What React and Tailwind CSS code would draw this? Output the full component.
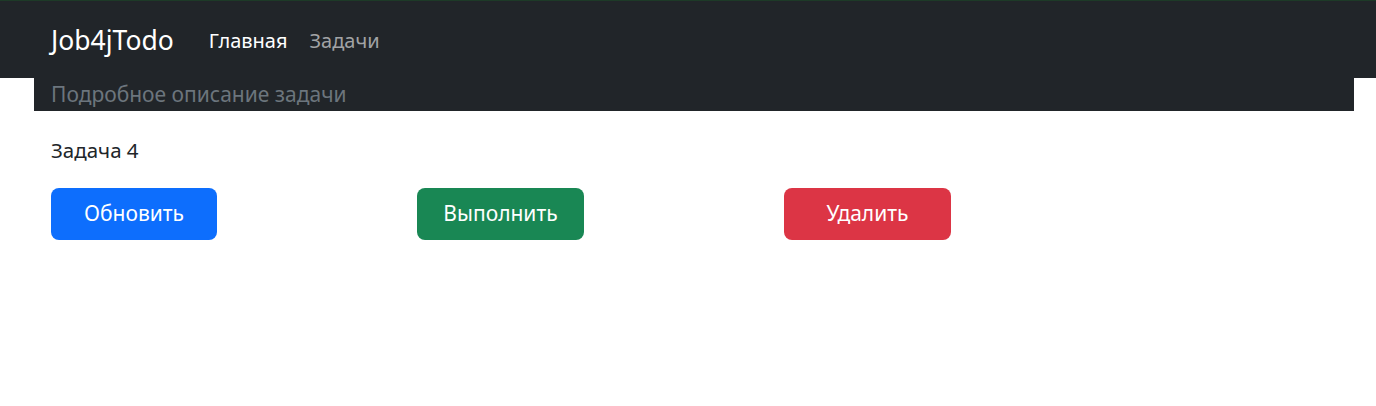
import React from "react";

export default function App() {
  return (
    <div className="min-h-[406px] bg-white" style={{ fontFamily: '"Noto Sans", "Open Sans", sans-serif' }}>
      <nav className="h-[78px] bg-[#212529] border-t border-[#1d3a27] flex items-center pl-[51px] pt-[2px]">
        <span className="text-white text-[26.5px] leading-none mr-[35px]">Job4jTodo</span>
        <a className="text-white text-[20px] mr-[22px]">Главная</a>
        <a className="text-[#a1a3a5] text-[20px]">Задачи</a>
      </nav>

      <div className="mx-[34px] w-[1320px]">
        <div className="h-[33px] bg-[#212529] px-[17px] flex items-center">
          <span className="text-[#6c757d] text-[21px] leading-none">Подробное описание задачи</span>
        </div>
        <div className="px-[17px] pt-[27px]">
          <p className="text-[#212529] text-[20.5px] leading-[24px]">Задача 4</p>
          <div className="flex mt-[26px]">
            <div className="w-[366px]">
              <button className="w-[166px] h-[52px] rounded-[8px] bg-[#0d6efd] text-white text-[21px]">Обновить</button>
            </div>
            <div className="w-[367px]">
              <button className="w-[167px] h-[52px] rounded-[8px] bg-[#198754] text-white text-[21px]">Выполнить</button>
            </div>
            <div>
              <button className="w-[167px] h-[52px] rounded-[8px] bg-[#dc3545] text-white text-[21px]">Удалить</button>
            </div>
          </div>
        </div>
      </div>
    </div>
  );
}
